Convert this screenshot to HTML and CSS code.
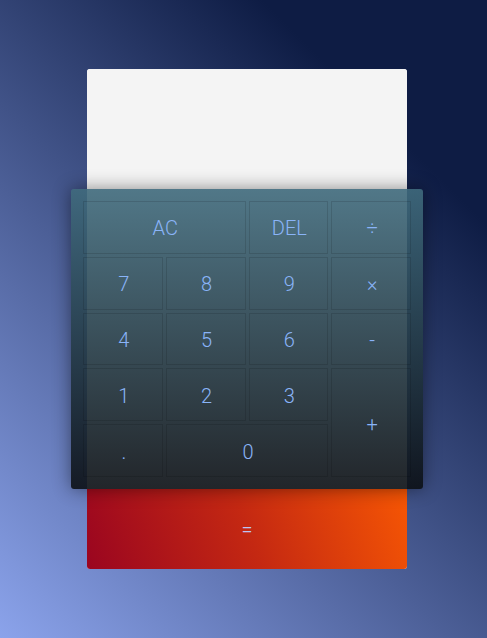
FILE: index.html
```html
<!DOCTYPE html>
<html lang="en">
<head>
<meta charset="utf-8">
<title>Calculator</title>
<link rel="stylesheet" href="styles.css">
</head>
<body>
<main class="calc">
  <div class="display"></div>
  <div class="keys">
    <button class="key span-2">AC</button>
    <button class="key">DEL</button>
    <button class="key">÷</button>
    <button class="key">7</button>
    <button class="key">8</button>
    <button class="key">9</button>
    <button class="key">×</button>
    <button class="key">4</button>
    <button class="key">5</button>
    <button class="key">6</button>
    <button class="key">-</button>
    <button class="key">1</button>
    <button class="key">2</button>
    <button class="key">3</button>
    <button class="key row-2">+</button>
    <button class="key">.</button>
    <button class="key span-2">0</button>
  </div>
  <button class="equals">=</button>
</main>
</body>
</html>
```

FILE: styles.css
```css
html, body {
  margin: 0;
  height: 100%;
}

body {
  background: linear-gradient(45deg, #8ba3eb 0%, #0e1c44 80%, #0e1c44 100%);
  font-family: Roboto, "Liberation Sans", sans-serif;
  display: flex;
  align-items: center;
  justify-content: center;
  padding-left: 7px;
  box-sizing: border-box;
}

.calc {
  width: 320px;
  display: flex;
  flex-direction: column;
  background: #f4f4f4;
  border-radius: 3px;
}

.display {
  height: 120px;
  background: #f4f4f4;
  border-radius: 3px 3px 0 0;
}

.keys {
  position: relative;
  z-index: 1;
  margin: 0 -16px;
  height: 300px;
  box-sizing: border-box;
  padding: 12px;
  display: grid;
  grid-template-columns: repeat(4, 1fr);
  grid-template-rows: repeat(5, 1fr);
  gap: 3px;
  border-radius: 3px;
  background: linear-gradient(to bottom, rgba(63, 106, 124, 0.9), rgba(11, 15, 20, 0.9));
  box-shadow: 0 0 18px rgba(0, 0, 0, 0.45);
}

.key {
  border: 1px solid rgba(0, 0, 0, 0.12);
  background: transparent;
  color: #8ab4f8;
  font-family: inherit;
  font-size: 20px;
  font-weight: 300;
  padding: 2px 0 0 2px;
  margin: 0;
}

.span-2 {
  grid-column: span 2;
}

.row-2 {
  grid-row: span 2;
}

.equals {
  height: 80px;
  border: none;
  border-radius: 0 0 3px 3px;
  background: linear-gradient(70deg, #9a0520 0%, #c42812 50%, #f65604 100%);
  color: #bcc6f4;
  font-family: inherit;
  font-size: 20px;
  font-weight: 300;
  padding: 0;
}
```
